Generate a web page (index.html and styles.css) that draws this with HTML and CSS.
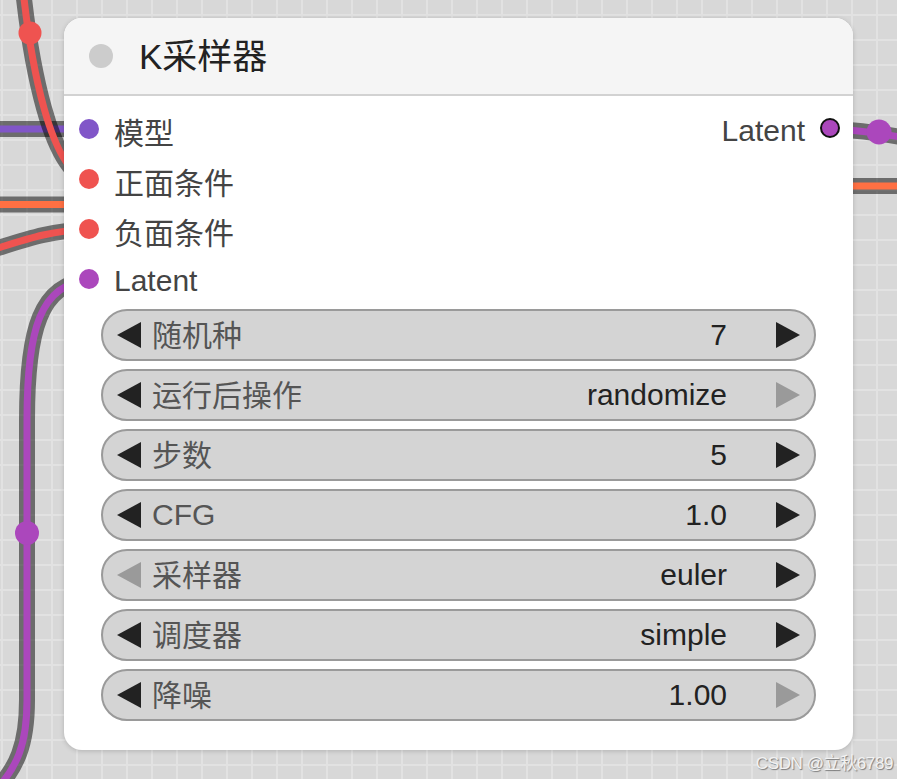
FILE: index.html
```html
<!DOCTYPE html>
<html lang="zh">
<head>
<meta charset="utf-8">
<title>K采样器</title>
<link rel="stylesheet" href="styles.css">
</head>
<body>
<div class="canvas">
  <svg class="wires" width="897" height="779" viewBox="0 0 897 779">
    <g fill="none">
      <path class="o" d="M-5 129 L90 129"/>
      <path d="M-5 129 L90 129" stroke="#8156c8" stroke-width="7"/>
      <path class="o" d="M-5 204.5 L90 204.5"/>
      <path d="M-5 204.5 L90 204.5" stroke="#ff7043" stroke-width="7"/>
      <path class="o" d="M-5 249 C30 238, 50 231, 90 229"/>
      <path d="M-5 249 C30 238, 50 231, 90 229" stroke="#ef5350" stroke-width="7"/>
      <path class="o" d="M22 -20 C30 60, 50 175, 90 180"/>
      <path d="M22 -20 C30 60, 50 175, 90 180" stroke="#ef5350" stroke-width="7"/>
      <path class="o" d="M-15 800 C20 770, 27 740, 27 700 L27 420 C27 330, 40 283, 90 280"/>
      <path d="M-15 800 C20 770, 27 740, 27 700 L27 420 C27 330, 40 283, 90 280" stroke="#ab47bc" stroke-width="7"/>
      <path class="o" d="M830 129 C860 130, 880 133, 905 138"/>
      <path d="M830 129 C860 130, 880 133, 905 138" stroke="#ab47bc" stroke-width="7"/>
      <path class="o" d="M830 186 L905 186"/>
      <path d="M830 186 L905 186" stroke="#ff7043" stroke-width="7"/>
    </g>
    <circle cx="30" cy="33" r="11.5" fill="#ef5350"/>
    <circle cx="27" cy="533" r="12" fill="#ab47bc"/>
    <circle cx="879" cy="132" r="12.5" fill="#ab47bc"/>
  </svg>

  <div class="node">
    <div class="node-title">
      <span class="title-dot"></span>
      <span class="title-text">K采样器</span>
    </div>
    <div class="node-body">
      <div class="slots">
        <div class="slot-row">
          <div class="slot"><span class="dot dot-model"></span><span class="slot-label">模型</span></div>
          <div class="slot slot-out"><span class="slot-label">Latent</span><span class="dot dot-out"></span></div>
        </div>
        <div class="slot-row">
          <div class="slot"><span class="dot dot-cond"></span><span class="slot-label">正面条件</span></div>
        </div>
        <div class="slot-row">
          <div class="slot"><span class="dot dot-cond"></span><span class="slot-label">负面条件</span></div>
        </div>
        <div class="slot-row">
          <div class="slot"><span class="dot dot-latent"></span><span class="slot-label">Latent</span></div>
        </div>
      </div>
      <div class="widgets">
        <div class="widget">
          <svg class="arrow" width="24" height="26" viewBox="0 0 24 26"><polygon points="24,0 24,26 0,13"/></svg>
          <span class="w-label w-cjk">随机种</span><span class="w-value">7</span>
          <svg class="arrow" width="24" height="26" viewBox="0 0 24 26"><polygon points="0,0 0,26 24,13"/></svg>
        </div>
        <div class="widget">
          <svg class="arrow" width="24" height="26" viewBox="0 0 24 26"><polygon points="24,0 24,26 0,13"/></svg>
          <span class="w-label w-cjk">运行后操作</span><span class="w-value">randomize</span>
          <svg class="arrow arrow-off" width="24" height="26" viewBox="0 0 24 26"><polygon points="0,0 0,26 24,13"/></svg>
        </div>
        <div class="widget">
          <svg class="arrow" width="24" height="26" viewBox="0 0 24 26"><polygon points="24,0 24,26 0,13"/></svg>
          <span class="w-label w-cjk">步数</span><span class="w-value">5</span>
          <svg class="arrow" width="24" height="26" viewBox="0 0 24 26"><polygon points="0,0 0,26 24,13"/></svg>
        </div>
        <div class="widget">
          <svg class="arrow" width="24" height="26" viewBox="0 0 24 26"><polygon points="24,0 24,26 0,13"/></svg>
          <span class="w-label">CFG</span><span class="w-value">1.0</span>
          <svg class="arrow" width="24" height="26" viewBox="0 0 24 26"><polygon points="0,0 0,26 24,13"/></svg>
        </div>
        <div class="widget">
          <svg class="arrow arrow-off" width="24" height="26" viewBox="0 0 24 26"><polygon points="24,0 24,26 0,13"/></svg>
          <span class="w-label w-cjk">采样器</span><span class="w-value">euler</span>
          <svg class="arrow" width="24" height="26" viewBox="0 0 24 26"><polygon points="0,0 0,26 24,13"/></svg>
        </div>
        <div class="widget">
          <svg class="arrow" width="24" height="26" viewBox="0 0 24 26"><polygon points="24,0 24,26 0,13"/></svg>
          <span class="w-label w-cjk">调度器</span><span class="w-value">simple</span>
          <svg class="arrow" width="24" height="26" viewBox="0 0 24 26"><polygon points="0,0 0,26 24,13"/></svg>
        </div>
        <div class="widget">
          <svg class="arrow" width="24" height="26" viewBox="0 0 24 26"><polygon points="24,0 24,26 0,13"/></svg>
          <span class="w-label w-cjk">降噪</span><span class="w-value">1.00</span>
          <svg class="arrow arrow-off" width="24" height="26" viewBox="0 0 24 26"><polygon points="0,0 0,26 24,13"/></svg>
        </div>
      </div>
    </div>
  </div>
  <div class="watermark">CSDN @立秋6789</div>
</div>
</body>
</html>
```

FILE: styles.css
```css
html, body {
  margin: 0;
  padding: 0;
}
body {
  width: 897px;
  height: 779px;
  overflow: hidden;
  background-color: #d8d8d8;
  background-image:
    linear-gradient(to right, #e2e2e2 2px, transparent 2px),
    linear-gradient(to bottom, #e2e2e2 2px, transparent 2px);
  background-size: 25px 25px;
  background-position: 1px 14px;
  font-family: "Liberation Sans", "Noto Sans CJK SC", Arial, sans-serif;
}
.canvas {
  position: relative;
  width: 897px;
  height: 779px;
  padding: 18px 0 0 64px;
  box-sizing: border-box;
}
.wires {
  position: absolute;
  left: 0;
  top: 0;
}
.wires .o {
  stroke: #000000;
  stroke-opacity: 0.5;
  stroke-width: 16;
}
.node {
  position: relative;
  width: 789px;
  background: #ffffff;
  border-radius: 18px;
  box-shadow: 0 1px 5px rgba(0, 0, 0, 0.18);
  overflow: hidden;
}
.node-title {
  height: 76px;
  background: #f5f5f5;
  border-bottom: 2px solid #d2d2d2;
  display: flex;
  align-items: center;
  padding-left: 25px;
}
.title-dot {
  width: 24px;
  height: 24px;
  border-radius: 50%;
  background: #cccccc;
}
.title-text {
  margin-left: 26px;
  padding-bottom: 5px;
  font-size: 35px;
  color: #222222;
}
.node-body {
  padding: 8px 0 29px 0;
}
.slot-row {
  height: 50px;
  display: flex;
  align-items: center;
  justify-content: space-between;
  padding: 0 13px 0 15px;
}
.slot {
  display: flex;
  align-items: center;
}
.slot-label {
  font-size: 30px;
  color: #444444;
  margin-left: 15px;
  padding-top: 3px;
}
.slot-out .slot-label {
  margin-left: 0;
  margin-right: 15px;
}
.dot {
  width: 20px;
  height: 20px;
  border-radius: 50%;
  box-sizing: border-box;
}
.dot-model { background: #8156c8; }
.dot-cond { background: #ef5350; }
.dot-latent { background: #ab47bc; }
.dot-out {
  background: #ab47bc;
  border: 2px solid #111111;
  margin-top: -2px;
}
.widgets {
  margin: 5px 37px 0 37px;
  display: flex;
  flex-direction: column;
  gap: 8px;
}
.widget {
  height: 52px;
  box-sizing: border-box;
  border: 2px solid #9a9a9a;
  border-radius: 26px;
  background: #d4d4d4;
  display: flex;
  align-items: center;
  padding: 0 14px;
}
.arrow {
  flex: none;
  fill: #222222;
}
.arrow-off {
  fill: #9a9a9a;
}
.w-label {
  margin-left: 11px;
  font-size: 30px;
  color: #555555;
}
.w-cjk {
  padding-bottom: 4px;
}
.w-value {
  flex: 1;
  text-align: right;
  margin-right: 49px;
  font-size: 30px;
  color: #222222;
}
.watermark {
  position: absolute;
  right: 4px;
  bottom: 5px;
  font-size: 17px;
  color: #f2f2f2;
  text-shadow: 1px 1px 1px #7a7a7a;
  letter-spacing: -0.4px;
}
```
